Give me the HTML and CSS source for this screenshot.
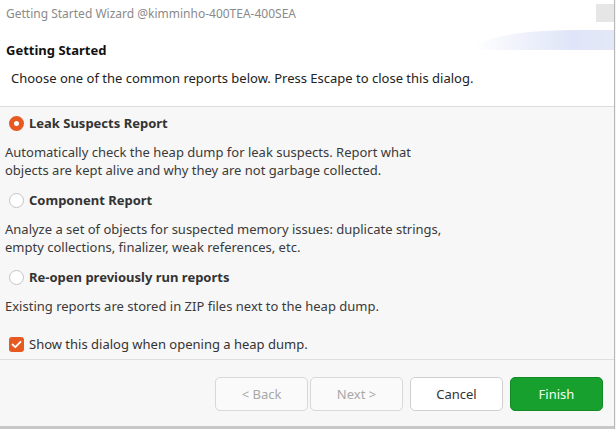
FILE: index.html
```html
<!DOCTYPE html>
<html>
<head>
<meta charset="utf-8">
<link rel="stylesheet" href="styles.css">
</head>
<body>
<div class="window">
  <div class="titlebar">
    <span class="title">Getting Started Wizard @kimminho-400TEA-400SEA</span>
    <span class="close-btn"></span>
  </div>
  <div class="header">
    <div class="banner"></div>
    <div class="header-title">Getting Started</div>
    <div class="header-desc">Choose one of the common reports below. Press Escape to close this dialog.</div>
  </div>
  <div class="body">
    <div class="option">
      <span class="radio checked"></span>
      <span class="option-label">Leak Suspects Report</span>
    </div>
    <div class="desc">Automatically check the heap dump for leak suspects. Report what<br>objects are kept alive and why they are not garbage collected.</div>
    <div class="option">
      <span class="radio"></span>
      <span class="option-label">Component Report</span>
    </div>
    <div class="desc">Analyze a set of objects for suspected memory issues: duplicate strings,<br>empty collections, finalizer, weak references, etc.</div>
    <div class="option">
      <span class="radio"></span>
      <span class="option-label">Re-open previously run reports</span>
    </div>
    <div class="desc">Existing reports are stored in ZIP files next to the heap dump.</div>
    <div class="check-row">
      <span class="checkbox">
        <svg width="11" height="9" viewBox="0 0 11 9"><path d="M1.5 4.5 L4.3 7.2 L9.5 1.8" fill="none" stroke="#fff" stroke-width="1.8" stroke-linecap="round" stroke-linejoin="round"/></svg>
      </span>
      <span class="check-label">Show this dialog when opening a heap dump.</span>
    </div>
  </div>
  <div class="footer">
    <button class="btn disabled">&lt; Back</button>
    <button class="btn disabled">Next &gt;</button>
    <button class="btn cancel">Cancel</button>
    <button class="btn primary">Finish</button>
  </div>
  <div class="bottom-edge"></div>
</div>
</body>
</html>
```
FILE: styles.css
```css
html, body {
  margin: 0;
  padding: 0;
}
body {
  width: 616px;
  height: 429px;
  overflow: hidden;
  font-family: "Noto Sans", "Open Sans", sans-serif;
  background: #f4f4f4;
}
.window {
  width: 614px;
  height: 429px;
  border-right: 1px solid #b8b8b8;
  display: flex;
  flex-direction: column;
  background: #f7f7f7;
}
.titlebar {
  height: 30px;
  background: #fff;
  display: flex;
  align-items: center;
  justify-content: space-between;
  padding-left: 6px;
}
.title {
  font-size: 12px;
  color: #8a8a8a;
  margin-top: -3px;
}
.close-btn {
  width: 18px;
  height: 18px;
  background: #e6e6e6;
  margin-right: 0;
  margin-top: -4px;
}
.header {
  height: 76px;
  background: #fff;
  border-bottom: 1px solid #dcdcdc;
  position: relative;
}
.banner {
  position: absolute;
  right: 0;
  top: 0;
  width: 140px;
  height: 20px;
  background: linear-gradient(to right, rgba(224,230,248,0), #dfe5f8 70%, #e4e8f8);
  border-radius: 100px 0 0 0 / 20px 0 0 0;
}
.header-title {
  font-size: 13px;
  font-weight: bold;
  color: #111;
  padding-left: 6px;
  padding-top: 11px;
  line-height: 18px;
}
.header-desc {
  font-size: 13px;
  color: #222;
  padding-left: 11px;
  margin-top: 10px;
  line-height: 18px;
}
.body {
  flex: 1;
  padding: 6px 0 0 5px;
  border-bottom: 1px solid #dedede;
}
.option {
  display: flex;
  align-items: center;
  height: 20px;
  padding-left: 4px;
}
.radio {
  width: 13px;
  height: 13px;
  border-radius: 50%;
  border: 1px solid #c4c4c4;
  background: #fff;
  box-sizing: content-box;
  margin-right: 5px;
}
.radio.checked {
  width: 5px;
  height: 5px;
  border: 5px solid #e65a21;
  background: #fff;
}
.option-label {
  font-size: 13px;
  font-weight: bold;
  color: #333;
}
.desc {
  font-size: 13px;
  color: #3a3a3a;
  line-height: 18px;
  margin-top: 10px;
  margin-bottom: 11px;
}
.check-row {
  display: flex;
  align-items: center;
  margin-top: 20px;
  padding-left: 4px;
}
.checkbox {
  width: 15px;
  height: 15px;
  border-radius: 3px;
  background: #e65a21;
  display: flex;
  align-items: center;
  justify-content: center;
  margin-right: 5px;
}
.check-label {
  font-size: 13px;
  color: #333;
}
.footer {
  height: 66px;
  display: flex;
  align-items: center;
  justify-content: flex-end;
  padding-right: 11px;
  gap: 2px;
}
.btn {
  width: 93px;
  height: 34px;
  border: 1px solid #cfcfcf;
  border-radius: 5px;
  background: #fff;
  font-family: "Noto Sans", "Open Sans", sans-serif;
  font-size: 13px;
  color: #333;
  margin-top: 1px;
}
.btn.disabled {
  color: #a8a8a8;
  border-color: #d8d8d8;
  background: #fafafa;
}
.btn.cancel {
  margin-left: 5px;
}
.btn.primary {
  margin-left: 5px;
  background: #17a02d;
  border-color: #128a25;
  color: #f0fff0;
}
.bottom-edge {
  height: 3px;
  background: #c8c8c8;
}
```
